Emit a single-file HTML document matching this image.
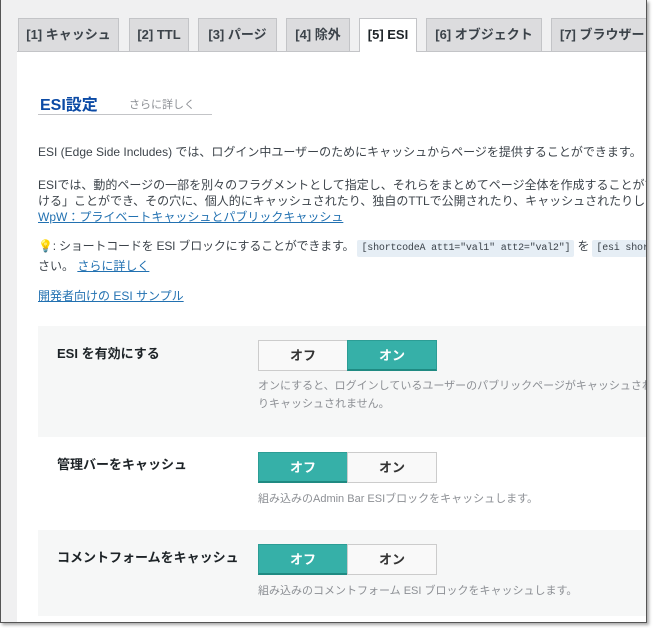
<!DOCTYPE html>
<html><head><meta charset="utf-8"><style>
*{margin:0;padding:0;box-sizing:border-box}
body{width:658px;height:628px;background:#fff;font-family:"Liberation Sans","Noto Sans CJK JP",sans-serif;position:relative;overflow:hidden}
#frame{position:absolute;left:0;top:0;width:647px;height:623px;border:1px solid #555;border-top:none;background:#f0f0f1;overflow:hidden;box-shadow:2px 2px 3px rgba(0,0,0,.35)}
.tab{position:absolute;top:18px;height:33px;background:#dcdcde;border:1px solid #c3c4c7;border-bottom:none;font-size:13px;color:#3c434a;line-height:32px;text-align:center;font-weight:bold;white-space:nowrap;overflow:hidden}
.tab.on{background:#fff;color:#1d2327;height:34px;z-index:2}
#panel{position:absolute;left:16px;top:51px;width:640px;height:600px;background:#fff;border-top:1px solid #c3c4c7}
.a{position:absolute;white-space:nowrap;font-size:12px;color:#3c434a}
a,.lk{color:#2271b1;text-decoration:underline}
code{background:#e6eef5;font-family:"Liberation Mono",monospace;font-size:10px;padding:3px 4px;border-radius:2px;color:#3c434a}
.row{position:absolute;left:37px;width:620px}
.lab{position:absolute;left:19px;font-size:13px;font-weight:bold;color:#1d2327}
.btn{position:absolute;top:0;width:90px;height:31px;font-size:13px;font-weight:bold;text-align:center;line-height:29px;border:1px solid #ccc;background:#f9f9f9;color:#333}
.btn.t{background:#36b0a8;color:#fff;border-color:#2c9d95;border-bottom:2px solid #1f8a82}
.d{position:absolute;left:220px;font-size:11px;color:#8c8f94;white-space:nowrap;line-height:18px}
</style></head><body>
<div id="frame">
<div class="tab" style="left:17px;width:101px">[1] キャッシュ</div>
<div class="tab" style="left:128px;width:60px">[2] TTL</div>
<div class="tab" style="left:197px;width:79px">[3] パージ</div>
<div class="tab" style="left:285px;width:64px">[4] 除外</div>
<div class="tab on" style="left:358px;width:58px">[5] ESI</div>
<div class="tab" style="left:425px;width:116px">[6] オブジェクト</div>
<div class="tab" style="left:550px;width:110px;text-align:left;padding-left:8px">[7] ブラウザー</div>
<div id="panel"></div>
<div class="a" style="left:39px;top:91px;font-size:16px;font-weight:bold;color:#0b4aa5">ESI設定</div>
<div class="a" style="left:128px;top:96px;font-size:11px;color:#8c8f94">さらに詳しく</div>
<div style="position:absolute;left:37px;top:114px;width:174px;height:1px;background:#c3c4c7"></div>
<div class="a" style="left:37px;top:143px">ESI (Edge Side Includes) では、ログイン中ユーザーのためにキャッシュからページを提供することができます。</div>
<div class="a" style="left:37px;top:176px">ESIでは、動的ページの一部を別々のフラグメントとして指定し、それらをまとめてページ全体を作成することができ、「穴をあ</div>
<div class="a" style="left:37px;top:192px">ける」ことができ、その穴に、個人的にキャッシュされたり、独自のTTLで公開されたり、キャッシュされたりしないように</div>
<div class="a lk" style="left:37px;top:208px">WpW：プライベートキャッシュとパブリックキャッシュ</div>
<div class="a" style="left:37px;top:237px;letter-spacing:-0.2px"><span style="color:#f5d76e">💡</span>: ショートコードを ESI ブロックにすることができます。 <code>[shortcodeA att1="val1" att2="val2"]</code> を <code>[esi shortcodeA</code></div>
<div class="a" style="left:37px;top:257px">さい。 <span class="lk">さらに詳しく</span></div>
<div class="a lk" style="left:37px;top:287px">開発者向けの ESI サンプル</div>

<div class="row" style="top:326px;height:111px;background:#f6f7f7">
<div class="lab" style="top:17px">ESI を有効にする</div>
<div style="position:absolute;left:220px;top:14px"><div class="btn" style="left:0">オフ</div><div class="btn t" style="left:89px">オン</div></div>
<div class="d" style="top:51px">オンにすると、ログインしているユーザーのパブリックページがキャッシュされます。<br>りキャッシュされません。</div>
</div>
<div class="row" style="top:437px;height:93px;background:#fff">
<div class="lab" style="top:17px">管理バーをキャッシュ</div>
<div style="position:absolute;left:220px;top:15px"><div class="btn t" style="left:0">オフ</div><div class="btn" style="left:89px">オン</div></div>
<div class="d" style="top:53px">組み込みのAdmin Bar ESIブロックをキャッシュします。</div>
</div>
<div class="row" style="top:530px;height:86px;background:#f6f7f7">
<div class="lab" style="top:17px">コメントフォームをキャッシュ</div>
<div style="position:absolute;left:220px;top:14px"><div class="btn t" style="left:0">オフ</div><div class="btn" style="left:89px">オン</div></div>
<div class="d" style="top:52px">組み込みのコメントフォーム ESI ブロックをキャッシュします。</div>
</div>
</div>
</body></html>
